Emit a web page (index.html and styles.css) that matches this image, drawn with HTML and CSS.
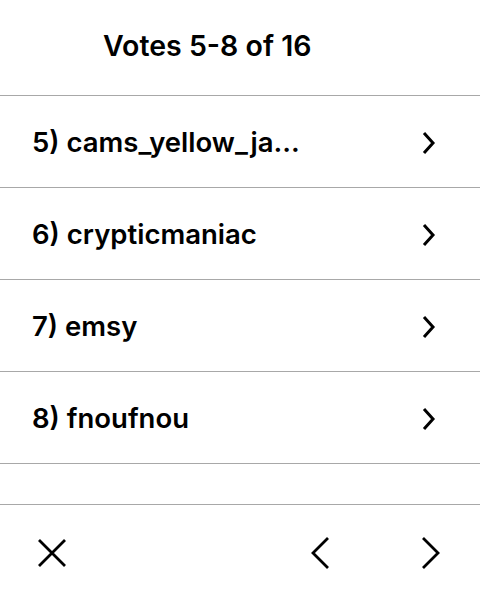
FILE: index.html
```html
<!DOCTYPE html>
<html>
<head>
<meta charset="utf-8">
<link rel="stylesheet" href="styles.css">
</head>
<body>
<div class="screen">
  <header class="header"><h1 class="title">Votes 5-8 of 16</h1></header>
  <ul class="list">
    <li class="row"><span class="name">5) cams_yellow_ja...</span><svg class="chev" width="16" height="24" viewBox="0 0 16 24"><path d="M3 2 L12 12 L3 22" fill="none" stroke="#000" stroke-width="3"/></svg></li>
    <li class="row"><span class="name">6) crypticmaniac</span><svg class="chev" width="16" height="24" viewBox="0 0 16 24"><path d="M3 2 L12 12 L3 22" fill="none" stroke="#000" stroke-width="3"/></svg></li>
    <li class="row"><span class="name">7) emsy</span><svg class="chev" width="16" height="24" viewBox="0 0 16 24"><path d="M3 2 L12 12 L3 22" fill="none" stroke="#000" stroke-width="3"/></svg></li>
    <li class="row"><span class="name">8) fnoufnou</span><svg class="chev" width="16" height="24" viewBox="0 0 16 24"><path d="M3 2 L12 12 L3 22" fill="none" stroke="#000" stroke-width="3"/></svg></li>
  </ul>
  <div class="spacer"></div>
  <footer class="footer">
    <svg class="icon close" width="32" height="32" viewBox="0 0 32 32"><path d="M3 3 L29 29 M29 3 L3 29" fill="none" stroke="#000" stroke-width="2.8"/></svg>
    <div class="nav">
      <svg class="icon" width="20" height="34" viewBox="0 0 20 34"><path d="M17 2 L2 17 L17 32" fill="none" stroke="#000" stroke-width="2.8"/></svg>
      <svg class="icon" width="20" height="34" viewBox="0 0 20 34"><path d="M3 2 L18 17 L3 32" fill="none" stroke="#000" stroke-width="2.8"/></svg>
    </div>
  </footer>
</div>
</body>
</html>
```
FILE: styles.css
```css
* { box-sizing: border-box; }
html, body { margin: 0; padding: 0; background: #fff; }
body { font-family: Inter, "Noto Sans", sans-serif; color: #000; }
.screen { width: 480px; height: 600px; display: flex; flex-direction: column; }
.header { height: 96px; border-bottom: 1px solid #a8a8a8; display: flex; align-items: flex-start; padding-left: 103px; }
.title { margin: 0; font-size: 28.5px; font-weight: 600; line-height: 34px; padding-top: 29px; }
.list { list-style: none; margin: 0; padding: 0; }
.row { height: 92px; border-bottom: 1px solid #a8a8a8; display: flex; align-items: center; justify-content: space-between; padding: 0 43px 0 32px; }
.name { font-size: 27.5px; font-weight: 600; line-height: 34px; }
.chev { display: block; margin-top: 2px; }
.spacer { height: 41px; border-bottom: 1px solid #a8a8a8; }
.footer { flex: 1; display: flex; align-items: center; justify-content: space-between; padding: 0 40px 0 36px; }
.icon { display: block; }
.nav { display: flex; gap: 89px; align-items: center; }
```
